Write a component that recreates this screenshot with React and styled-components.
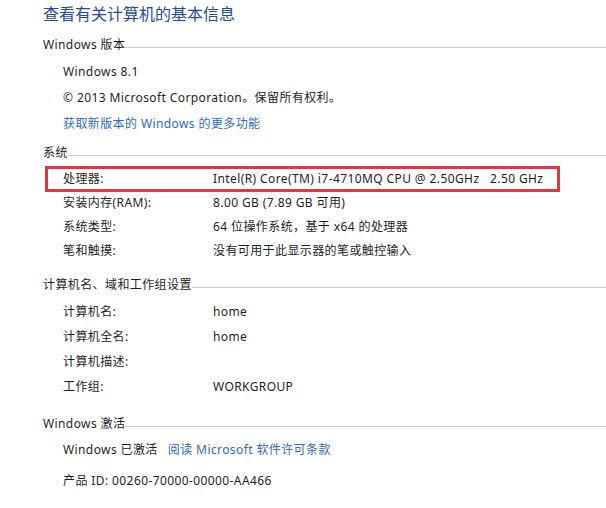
import React from "react";
import styled, { createGlobalStyle } from "styled-components";

const GlobalStyle = createGlobalStyle`
  body {
    margin: 0;
    background: #fff;
    font-family: "Noto Sans", "Noto Sans CJK SC", sans-serif;
    font-size: 12px;
    letter-spacing: 0.4px;
    color: #1e1e1e;
  }
`;

const Page = styled.div`
  width: 606px;
  height: 508px;
  padding-left: 43px;
  box-sizing: border-box;
  overflow: hidden;
`;

const Title = styled.div`
  height: 26px;
  line-height: 26px;
  font-size: 16px;
  letter-spacing: 0;
  color: #1f4c9e;
  font-family: "Noto Sans CJK SC", sans-serif;
`;

const Section = styled.div`
  margin-top: ${(p) => p.$top}px;
`;

const Heading = styled.div`
  display: flex;
  align-items: center;
  height: 20px;
  line-height: 20px;

  &::after {
    content: "";
    flex: 1;
    border-top: 1px solid #cccccc;
    margin-top: 5px;
  }
`;

const List = styled.div`
  margin-top: ${(p) => p.$top}px;
  padding-left: 20px;
  display: flex;
  flex-direction: column;
  gap: ${(p) => p.$gap || 0}px;
`;

const Line = styled.div`
  height: ${(p) => p.$h}px;
  line-height: ${(p) => p.$h}px;
  white-space: nowrap;
`;

const Row = styled.div`
  position: relative;
  display: grid;
  grid-template-columns: 150px 1fr;
  height: ${(p) => p.$h}px;
  line-height: ${(p) => p.$h}px;
  white-space: nowrap;

  ${(p) =>
    p.$highlight &&
    `
    &::after {
      content: "";
      position: absolute;
      top: -1px;
      bottom: -1px;
      left: -18px;
      width: 515px;
      border: 3px solid #e0383e;
      box-sizing: border-box;
    }
  `}
`;

const Link = styled.span`
  color: #2a6bc6;
  margin-left: ${(p) => p.$gap || 0}px;
`;

const systemRows = [
  ["处理器:", "Intel(R) Core(TM) i7-4710MQ CPU @ 2.50GHz\u00a0\u00a0\u00a02.50 GHz", true],
  ["安装内存(RAM):", "8.00 GB (7.89 GB 可用)"],
  ["系统类型:", "64 位操作系统，基于 x64 的处理器"],
  ["笔和触摸:", "没有可用于此显示器的笔或触控输入"],
];

const nameRows = [
  ["计算机名:", "home"],
  ["计算机全名:", "home"],
  ["计算机描述:", ""],
  ["工作组:", "WORKGROUP"],
];

export default function App() {
  return (
    <Page>
      <GlobalStyle />
      <Title>查看有关计算机的基本信息</Title>

      <Section $top={9}>
        <Heading>Windows 版本</Heading>
        <List $top={4}>
          <Line $h={26}>Windows 8.1</Line>
          <Line $h={26}>© 2013 Microsoft Corporation。保留所有权利。</Line>
          <Line $h={26}>
            <Link>获取新版本的 Windows 的更多功能</Link>
          </Line>
        </List>
      </Section>

      <Section $top={6}>
        <Heading>系统</Heading>
        <List $top={4}>
          {systemRows.map(([k, v, hl]) => (
            <Row key={k} $h={24} $highlight={hl}>
              <span>{k}</span>
              <span>{v}</span>
            </Row>
          ))}
        </List>
      </Section>

      <Section $top={12}>
        <Heading>计算机名、域和工作组设置</Heading>
        <List $top={4}>
          {nameRows.map(([k, v]) => (
            <Row key={k} $h={25}>
              <span>{k}</span>
              <span>{v}</span>
            </Row>
          ))}
        </List>
      </Section>

      <Section $top={15}>
        <Heading>Windows 激活</Heading>
        <List $top={3} $gap={6}>
          <Line $h={25}>
            Windows 已激活
            <Link $gap={10}>阅读 Microsoft 软件许可条款</Link>
          </Line>
          <Line $h={25}>产品 ID: 00260-70000-00000-AA466</Line>
        </List>
      </Section>
    </Page>
  );
}
